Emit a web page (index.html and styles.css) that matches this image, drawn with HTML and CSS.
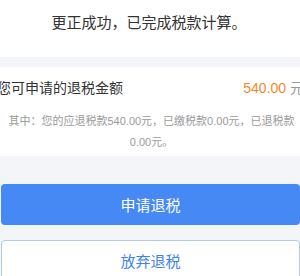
FILE: index.html
```html
<!DOCTYPE html>
<html lang="zh-CN">
<head>
  <meta charset="UTF-8" />
  <meta name="viewport" content="width=device-width, initial-scale=1.0" />
  <title>退税申请</title>
  <link rel="stylesheet" href="styles.css">
</head>
<body>
  <div class="result-title">更正成功，已完成税款计算。</div>

  <div class="refund-card">
    <div class="refund-row">
      <span class="refund-label">您可申请的退税金额</span>
      <span class="refund-amount">540.00 <em>元</em></span>
    </div>
    <p class="refund-detail">其中：您的应退税款540.00元，已缴税款0.00元，已退税款0.00元。</p>
  </div>

  <div class="action-buttons">
    <button type="button" class="btn btn-primary">申请退税</button>
    <button type="button" class="btn btn-outline">放弃退税</button>
  </div>
</body>
</html>
```

FILE: styles.css
```css
* { margin: 0; padding: 0; box-sizing: border-box; }
body {
  font-family: "Liberation Sans", "Noto Sans CJK SC", sans-serif;
  background-color: #f4f5f8;
  width: 300px;
  overflow: hidden;
}

.result-title {
  height: 57px;
  line-height: 45px;
  background-color: white;
  color: #333;
  font-size: 15px;
  text-align: center;
  padding-right: 2px;
}

.refund-card {
  margin-top: 10px;
  background-color: white;
  padding-bottom: 3px;
}

.refund-row {
  display: flex;
  justify-content: space-between;
  align-items: center;
  height: 40px;
  margin: 0 -4px 0 -3px;
  font-size: 14px;
}

.refund-label { color: #333; }

.refund-amount { color: #f08a2c; }
.refund-amount em { font-style: normal; color: #999; }

.refund-detail {
  padding: 4px 3px 0 6px;
  font-size: 11px;
  line-height: 21px;
  color: #9a9a9a;
  text-align: center;
}

.action-buttons {
  display: flex;
  flex-direction: column;
  gap: 15px;
  margin-top: 28px;
  padding-left: 1px;
}

.btn {
  width: 299px;
  height: 41px;
  border-radius: 4px;
  font-family: "Liberation Sans", "Noto Sans CJK SC", sans-serif;
  font-size: 15px;
  cursor: pointer;
}

.btn-primary {
  background-color: #4689f5;
  border: none;
  color: white;
}

.btn-outline {
  background-color: white;
  border: 1px solid #b0cbe8;
  color: #3e82f0;
}
```
